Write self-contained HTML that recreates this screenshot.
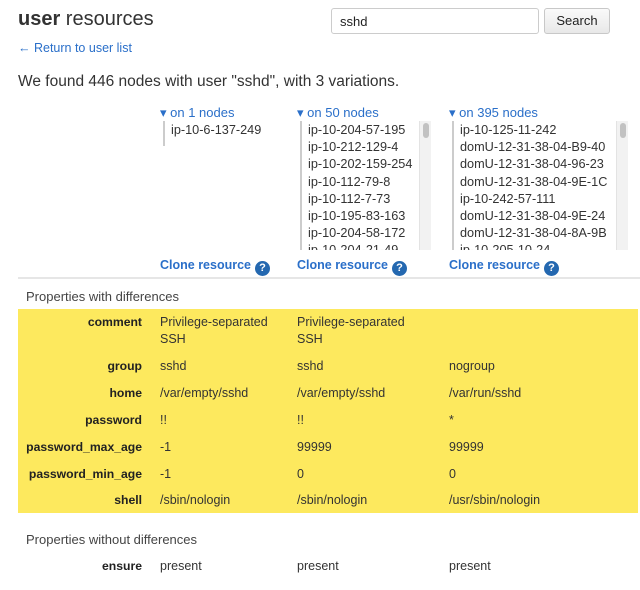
<!DOCTYPE html>
<html><head><meta charset="utf-8"><style>
*{margin:0;padding:0;box-sizing:border-box}
body{width:640px;height:590px;background:#fff;font-family:"Liberation Sans",Arial,sans-serif;color:#333;position:relative;overflow:hidden;font-size:12.5px}
.a{position:absolute;white-space:nowrap}
.blue{color:#2a6fc9}
.h{font-size:13px;color:#2a6fc9}
.list{position:absolute;top:121px;height:129px;overflow:hidden;border-left:2px solid #ccc;padding-left:6px;padding-top:1px;font-size:12.7px;line-height:17.2px;color:#333}
.sb{position:absolute;top:121px;width:12px;height:129px;background:#f2f2f2;border-left:1px solid #e3e3e3}
.sb i{position:absolute;left:3px;top:2px;width:6px;height:15px;border-radius:3px;background:#c2c2c2}
.clone{position:absolute;top:258px;font-weight:bold;color:#2a6fc9;font-size:12.5px}
.q{display:inline-block;width:15px;height:15px;border-radius:50%;background:#2468b0;color:#fff;font-size:11px;text-align:center;line-height:15px;margin-left:4px;vertical-align:-2px}
.lab{position:absolute;right:498px;font-weight:bold;color:#222;font-size:12.2px}
.v{position:absolute;font-size:12.5px;color:#333;line-height:17px}
</style></head><body>
<div class="a" style="left:18px;top:8px;font-size:20px;color:#333"><b>user</b> resources</div>
<div class="a" style="left:331px;top:8px;width:208px;height:26px;border:1px solid #ccc;border-radius:3px;padding:5px 8px;font-size:13px;color:#222">sshd</div>
<div class="a" style="left:544px;top:8px;width:66px;height:26px;border:1px solid #c8c8c8;border-radius:3px;background:linear-gradient(#fafafa,#e8e8e8);text-align:center;line-height:24px;font-size:13px;color:#222">Search</div>
<div class="a blue" style="left:18px;top:41px;font-size:12.5px">← Return to user list</div>
<div class="a" style="left:18px;top:73px;font-size:15.5px;color:#333">We found 446 nodes with user "sshd", with 3 variations.</div>

<div class="a h" style="left:160px;top:105px">▾ on 1 nodes</div>
<div class="a h" style="left:297px;top:105px">▾ on 50 nodes</div>
<div class="a h" style="left:449px;top:105px">▾ on 395 nodes</div>

<div class="list" style="left:163px;height:25px">ip-10-6-137-249</div>
<div class="list" style="left:300px;width:120px">ip-10-204-57-195<br>ip-10-212-129-4<br>ip-10-202-159-254<br>ip-10-112-79-8<br>ip-10-112-7-73<br>ip-10-195-83-163<br>ip-10-204-58-172<br>ip-10-204-21-49</div>
<div class="sb" style="left:419px"><i></i></div>
<div class="list" style="left:452px;width:166px">ip-10-125-11-242<br>domU-12-31-38-04-B9-40<br>domU-12-31-38-04-96-23<br>domU-12-31-38-04-9E-1C<br>ip-10-242-57-111<br>domU-12-31-38-04-9E-24<br>domU-12-31-38-04-8A-9B<br>ip-10-205-10-24</div>
<div class="sb" style="left:616px"><i></i></div>

<div class="clone" style="left:160px">Clone resource<span class="q">?</span></div>
<div class="clone" style="left:297px">Clone resource<span class="q">?</span></div>
<div class="clone" style="left:449px">Clone resource<span class="q">?</span></div>

<div class="a" style="left:18px;top:277px;width:622px;height:2px;background:#e6e6e6"></div>
<div class="a" style="left:26px;top:289px;font-size:13px;color:#444">Properties with differences</div>
<div class="a" style="left:18px;top:309px;width:620px;height:204px;background:#fde95e"></div>

<div class="lab" style="top:315px">comment</div>
<div class="v" style="left:160px;top:314px">Privilege-separated<br>SSH</div>
<div class="v" style="left:297px;top:314px">Privilege-separated<br>SSH</div>

<div class="lab" style="top:359px">group</div>
<div class="v" style="left:160px;top:358px">sshd</div><div class="v" style="left:297px;top:358px">sshd</div><div class="v" style="left:449px;top:358px">nogroup</div>
<div class="lab" style="top:386px">home</div>
<div class="v" style="left:160px;top:385px">/var/empty/sshd</div><div class="v" style="left:297px;top:385px">/var/empty/sshd</div><div class="v" style="left:449px;top:385px">/var/run/sshd</div>
<div class="lab" style="top:413px">password</div>
<div class="v" style="left:160px;top:412px">!!</div><div class="v" style="left:297px;top:412px">!!</div><div class="v" style="left:449px;top:412px">*</div>
<div class="lab" style="top:440px">password_max_age</div>
<div class="v" style="left:160px;top:439px">-1</div><div class="v" style="left:297px;top:439px">99999</div><div class="v" style="left:449px;top:439px">99999</div>
<div class="lab" style="top:467px">password_min_age</div>
<div class="v" style="left:160px;top:466px">-1</div><div class="v" style="left:297px;top:466px">0</div><div class="v" style="left:449px;top:466px">0</div>
<div class="lab" style="top:493px">shell</div>
<div class="v" style="left:160px;top:492px">/sbin/nologin</div><div class="v" style="left:297px;top:492px">/sbin/nologin</div><div class="v" style="left:449px;top:492px">/usr/sbin/nologin</div>

<div class="a" style="left:26px;top:532px;font-size:13px;color:#444">Properties without differences</div>
<div class="lab" style="top:559px">ensure</div>
<div class="v" style="left:160px;top:558px">present</div><div class="v" style="left:297px;top:558px">present</div><div class="v" style="left:449px;top:558px">present</div>
</body></html>
